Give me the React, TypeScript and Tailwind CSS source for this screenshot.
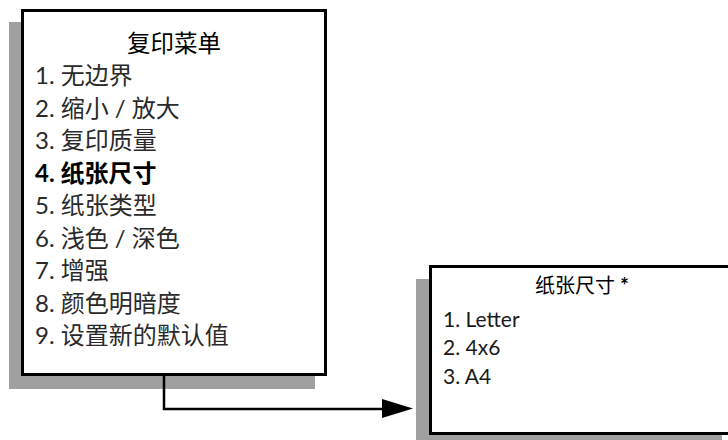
import React from "react";

const FONT = 'Lato, "Noto Sans CJK SC", sans-serif';

const leftItems = [
  "1. 无边界",
  "2. 缩小 / 放大",
  "3. 复印质量",
  "4. 纸张尺寸",
  "5. 纸张类型",
  "6. 浅色 / 深色",
  "7. 增强",
  "8. 颜色明暗度",
  "9. 设置新的默认值",
];

const rightItems = ["1. Letter", "2. 4x6", "3. A4"];

export default function App() {
  return (
    <div
      className="relative w-[728px] h-[440px] overflow-hidden bg-white"
      style={{ fontFamily: FONT }}
    >
      {/* left shadow */}
      <div className="absolute left-[9px] top-[22px] w-[306px] h-[367px] bg-[#a0a0a0]" />
      {/* left box */}
      <div className="absolute left-[21px] top-[9px] w-[306px] h-[367px] border-[3px] border-black bg-white pt-[15px] pl-[11px] flex flex-col">
        <div className="text-center text-[23.5px] leading-[32px] text-black pr-[11px]">复印菜单</div>
        <div className="flex flex-col">
          {leftItems.map((t, i) => {
            const bold = i === 3;
            return (
              <div
                key={t}
                className={
                  "text-[24px] leading-[32.5px] whitespace-pre " +
                  (bold ? "text-black font-bold" : "text-[#2a2a2a]")
                }
              >
                {t}
              </div>
            );
          })}
        </div>
      </div>

      {/* connector arrow */}
      <svg className="absolute left-0 top-0" width="728" height="440" viewBox="0 0 728 440">
        <polyline
          points="164,376 164,409 384,409"
          fill="none"
          stroke="#000"
          strokeWidth="2.5"
        />
        <polygon points="382,399 413,408.5 382,418" fill="#000" />
      </svg>

      {/* right shadow */}
      <div className="absolute left-[416px] top-[279px] w-[306px] h-[170px] bg-[#a0a0a0]" />
      {/* right box */}
      <div className="absolute left-[429px] top-[265px] w-[306px] h-[170px] border-[3px] border-black bg-white pt-[3px] pl-[11px] flex flex-col">
        <div className="text-center text-[20px] leading-[28.5px] text-black pr-[11px]">
          纸张尺寸 <span className="font-bold text-[21px]">*</span>
        </div>
        <div className="flex flex-col mt-[5px]">
          {rightItems.map((t) => (
            <div key={t} className="text-[21px] leading-[28.5px] text-[#1a1a1a] whitespace-pre">
              {t}
            </div>
          ))}
        </div>
      </div>
    </div>
  );
}
